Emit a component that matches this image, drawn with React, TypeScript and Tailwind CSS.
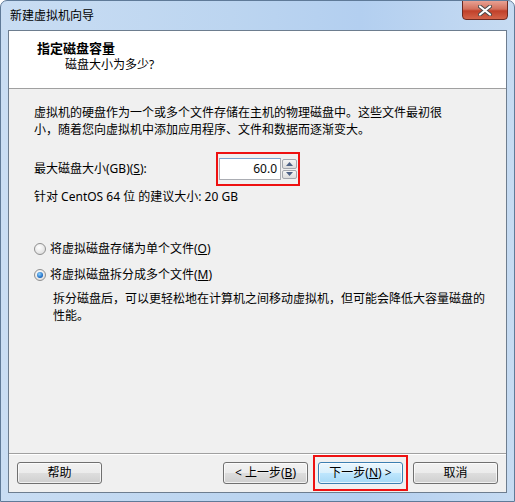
import React from 'react';

const font = "font-['Noto_Sans','Noto_Sans_CJK_SC',sans-serif]";

function Radio({ checked }: { checked?: boolean }) {
    return (
        <span className="flex h-[12px] w-[12px] items-center justify-center rounded-full border border-[#8f8f8f] bg-[radial-gradient(circle_at_40%_35%,#ffffff,#d6d6d6)]">
            {checked && (
                <span className="h-[6px] w-[6px] rounded-full bg-[radial-gradient(circle_at_40%_35%,#8fd3ff,#1565c0_70%,#0b3d7a)]" />
            )}
        </span>
    );
}

function WinButton({ children, active }: { children: React.ReactNode; active?: boolean }) {
    return (
        <button
            className={
                active
                    ? 'flex h-[22px] w-[85px] items-center justify-center rounded-[3px] border border-[#3c7fb1] bg-[linear-gradient(#eaf6fd_0%,#d9f0fc_50%,#bee6fd_51%,#a7d9f5_100%)] text-[12px] text-black shadow-[inset_0_0_0_1px_rgba(255,255,255,0.7)]'
                    : 'flex h-[22px] w-[85px] items-center justify-center rounded-[3px] border border-[#707070] bg-[linear-gradient(#f2f2f2_0%,#ebebeb_50%,#dddddd_51%,#cfcfcf_100%)] text-[12px] text-black shadow-[inset_0_0_0_1px_rgba(255,255,255,0.7)]'
            }
        >
            {children}
        </button>
    );
}

export default function App() {
    return (
        <div className={`${font} flex h-[502px] w-[515px] flex-col overflow-hidden rounded-t-[7px] border border-[#5f7a98] bg-[linear-gradient(90deg,#c9ddf3,#bcd5f0_45%,#b3cff0_70%,#c6dbf2)] text-[12px] text-black`}>
            {/* title bar */}
            <div className="relative flex h-[29px] shrink-0 items-center pl-[9px]">
                <span className="leading-[14px] text-black">新建虚拟机向导</span>
                <div className="absolute right-[6px] top-[-1px] flex h-[20px] w-[46px] items-center justify-center rounded-b-[4px] border border-[#6b2a22] bg-[linear-gradient(#e8a193_0%,#d3705c_45%,#c0402a_55%,#d4644a_100%)]">
                    <svg width="14" height="11" viewBox="0 0 14 11">
                        <path d="M2 1.5 L12 9.5 M12 1.5 L2 9.5" stroke="#4a4a4a" strokeWidth="4" strokeLinecap="round" />
                        <path d="M2 1.5 L12 9.5 M12 1.5 L2 9.5" stroke="#ffffff" strokeWidth="2.2" strokeLinecap="round" />
                    </svg>
                </div>
            </div>

            {/* client area */}
            <div className="mx-[7px] mb-[8px] flex flex-1 flex-col border border-[#6d7d8f] bg-[#f0f0f0]">
                <div className="flex h-[58px] shrink-0 flex-col border-b border-[#a0a0a0] bg-white pl-[28px] pt-[9px]">
                    <div className="text-[13px] font-bold leading-[16px]">指定磁盘容量</div>
                    <div className="mt-[1px] pl-[28px] leading-[16px]">磁盘大小为多少?</div>
                </div>

                <div className="flex flex-1 flex-col pl-[25px] pr-[20px] pt-[15px]">
                    <p className="leading-[17px]">
                        虚拟机的硬盘作为一个或多个文件存储在主机的物理磁盘中。这些文件最初很
                        <br />
                        小，随着您向虚拟机中添加应用程序、文件和数据而逐渐变大。
                    </p>

                    <div className="mt-[20px] flex items-center">
                        <span className="w-[185px]">
                            最大磁盘大小(GB)(<span className="underline">S</span>):
                        </span>
                        <div className="relative flex h-[22px]">
                            <div className="absolute -inset-x-[3px] -inset-y-[6px] border-2 border-[#ee1111]" />
                            <div className="flex w-[62px] items-center justify-end border border-[#abadb3] border-t-[#7da2ce] bg-white pr-[3px] text-[#0a0a0a]">
                                60.0
                            </div>
                            <div className="flex w-[16px] flex-col gap-[1px] py-[1px] pl-[1px]">
                                <div className="flex flex-1 items-center justify-center rounded-[2px] border border-[#a3a6ad] bg-[linear-gradient(#f5f5f5,#dcdcdc)]">
                                    <svg width="7" height="4" viewBox="0 0 7 4">
                                        <path d="M0 4 L3.5 0 L7 4 Z" fill="#4d6185" />
                                    </svg>
                                </div>
                                <div className="flex flex-1 items-center justify-center rounded-[2px] border border-[#a3a6ad] bg-[linear-gradient(#f5f5f5,#dcdcdc)]">
                                    <svg width="7" height="4" viewBox="0 0 7 4">
                                        <path d="M0 0 L3.5 4 L7 0 Z" fill="#4d6185" />
                                    </svg>
                                </div>
                            </div>
                        </div>
                    </div>

                    <div className="mt-[10px] leading-[14px]">针对 CentOS 64 位 的建议大小: 20 GB</div>

                    <label className="mt-[38px] flex items-center gap-[4px] leading-[14px]">
                        <Radio />
                        <span>
                            将虚拟磁盘存储为单个文件(<span className="underline">O</span>)
                        </span>
                    </label>
                    <label className="mt-[12px] flex items-center gap-[4px] leading-[14px]">
                        <Radio checked />
                        <span>
                            将虚拟磁盘拆分成多个文件(<span className="underline">M</span>)
                        </span>
                    </label>
                    <p className="mt-[8px] pl-[19px] leading-[17px]">
                        拆分磁盘后，可以更轻松地在计算机之间移动虚拟机，但可能会降低大容量磁盘的
                        <br />
                        性能。
                    </p>
                </div>

                <div className="flex h-[39px] shrink-0 items-center justify-between border-t border-[#a0a0a0] pl-[8px] pr-[8px] shadow-[inset_0_1px_0_#ffffff]">
                    <WinButton>帮助</WinButton>
                    <div className="flex gap-[10px]">
                        <WinButton>
                            &lt; 上一步(<span className="underline">B</span>)
                        </WinButton>
                        <div className="relative">
                            <div className="absolute -inset-x-[5px] -inset-y-[7px] border-2 border-[#ee1111]" />
                            <WinButton active>
                                下一步(<span className="underline">N</span>) &gt;
                            </WinButton>
                        </div>
                        <WinButton>取消</WinButton>
                    </div>
                </div>
            </div>
        </div>
    );
}
